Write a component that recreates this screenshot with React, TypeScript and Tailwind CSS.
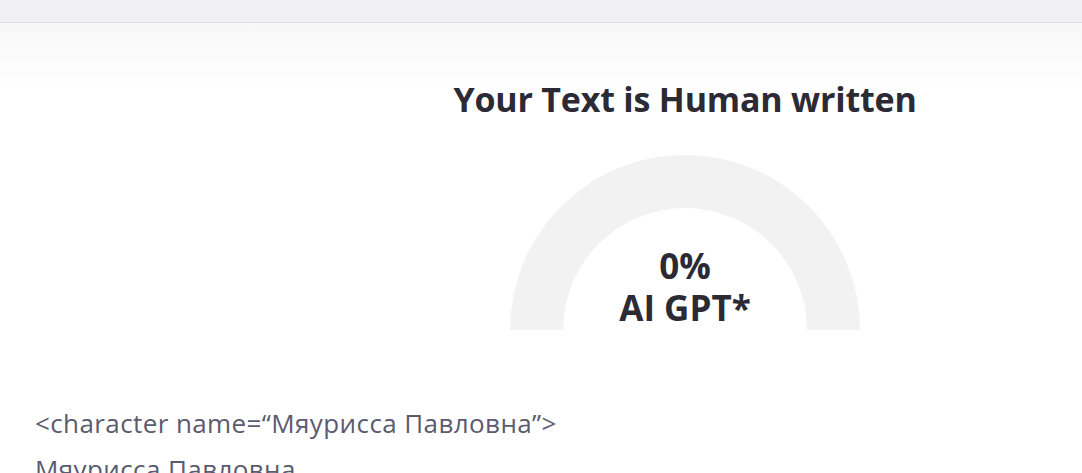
export default function App() {
  return (
    <div className="min-h-[473px] bg-white font-['Open_Sans','Noto_Sans',sans-serif] text-[#2b2a35] overflow-hidden">
      {/* top bar */}
      <div className="h-[23px] bg-[#f0f0f2] border-b border-[#dcdde5]" />

      <div className="bg-linear-to-b from-[#f7f7f8] to-white to-[70px]">
        <div className="flex">
          <div className="w-[288px] shrink-0" />
          <div className="flex-1 flex flex-col items-center pt-[54px]">
            <h2 className="text-[34px] leading-[44px] font-bold tracking-[-0.2px]">Your Text is Human written</h2>

            {/* gauge */}
            <div className="relative mt-[34px] w-[350px] h-[175px]">
              <svg width="350" height="175" viewBox="0 0 350 175" className="block">
                <path
                  d="M0 175 A175 175 0 0 1 350 175 L297 175 A122 122 0 0 0 53 175 Z"
                  fill="#f2f2f2"
                />
              </svg>
              <div className="absolute inset-x-0 bottom-[1px] flex flex-col items-center text-[35px] leading-[42px] font-bold">
                <span>0%</span>
                <span>AI GPT*</span>
              </div>
            </div>
          </div>
        </div>

        <div className="px-[35px] pt-[70px] text-[26px] leading-[46px] tracking-[0.4px] text-[#5b5b6f]">
          <p>&lt;character name=“Мяурисса Павловна”&gt;</p>
          <p>Мяурисса Павловна</p>
        </div>
      </div>
    </div>
  )
}
